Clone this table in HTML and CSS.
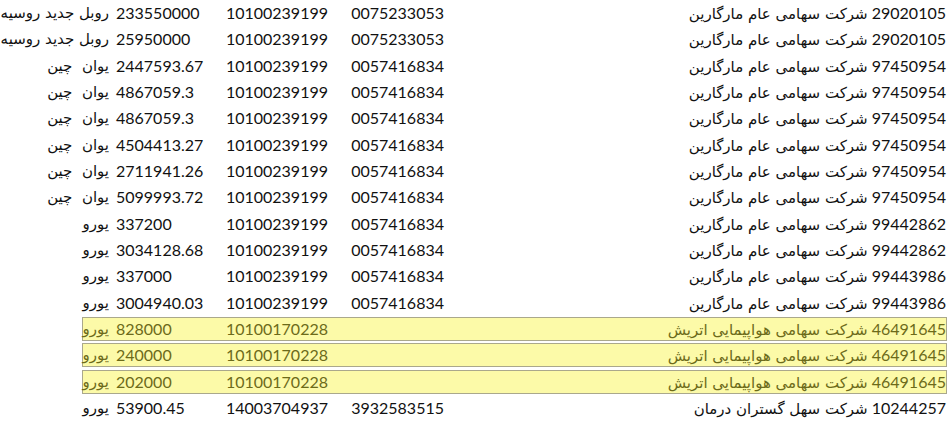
FILE: index.html
```html
<!DOCTYPE html>
<html lang="fa" dir="rtl">
<head>
  <meta charset="UTF-8" />
  <meta name="viewport" content="width=device-width, initial-scale=1.0"/>
  <title>Payments</title>
  <link rel="stylesheet" href="styles.css">
</head>
<body>
  <div class="list">
    <div class="row"><span class="c-name">29020105 <span class="fa">شرکت سهامی عام مارگارین</span></span><span class="c-nid">0075233053</span><span class="c-acct">10100239199</span><span class="c-amount">233550000</span><span class="c-cur fa">روبل جدید روسیه</span></div>
    <div class="row"><span class="c-name">29020105 <span class="fa">شرکت سهامی عام مارگارین</span></span><span class="c-nid">0075233053</span><span class="c-acct">10100239199</span><span class="c-amount">25950000</span><span class="c-cur fa">روبل جدید روسیه</span></div>
    <div class="row"><span class="c-name">97450954 <span class="fa">شرکت سهامی عام مارگارین</span></span><span class="c-nid">0057416834</span><span class="c-acct">10100239199</span><span class="c-amount">2447593.67</span><span class="c-cur fa">یوان&nbsp; چین</span></div>
    <div class="row"><span class="c-name">97450954 <span class="fa">شرکت سهامی عام مارگارین</span></span><span class="c-nid">0057416834</span><span class="c-acct">10100239199</span><span class="c-amount">4867059.3</span><span class="c-cur fa">یوان&nbsp; چین</span></div>
    <div class="row"><span class="c-name">97450954 <span class="fa">شرکت سهامی عام مارگارین</span></span><span class="c-nid">0057416834</span><span class="c-acct">10100239199</span><span class="c-amount">4867059.3</span><span class="c-cur fa">یوان&nbsp; چین</span></div>
    <div class="row"><span class="c-name">97450954 <span class="fa">شرکت سهامی عام مارگارین</span></span><span class="c-nid">0057416834</span><span class="c-acct">10100239199</span><span class="c-amount">4504413.27</span><span class="c-cur fa">یوان&nbsp; چین</span></div>
    <div class="row"><span class="c-name">97450954 <span class="fa">شرکت سهامی عام مارگارین</span></span><span class="c-nid">0057416834</span><span class="c-acct">10100239199</span><span class="c-amount">2711941.26</span><span class="c-cur fa">یوان&nbsp; چین</span></div>
    <div class="row"><span class="c-name">97450954 <span class="fa">شرکت سهامی عام مارگارین</span></span><span class="c-nid">0057416834</span><span class="c-acct">10100239199</span><span class="c-amount">5099993.72</span><span class="c-cur fa">یوان&nbsp; چین</span></div>
    <div class="row"><span class="c-name">99442862 <span class="fa">شرکت سهامی عام مارگارین</span></span><span class="c-nid">0057416834</span><span class="c-acct">10100239199</span><span class="c-amount">337200</span><span class="c-cur fa">یورو</span></div>
    <div class="row"><span class="c-name">99442862 <span class="fa">شرکت سهامی عام مارگارین</span></span><span class="c-nid">0057416834</span><span class="c-acct">10100239199</span><span class="c-amount">3034128.68</span><span class="c-cur fa">یورو</span></div>
    <div class="row"><span class="c-name">99443986 <span class="fa">شرکت سهامی عام مارگارین</span></span><span class="c-nid">0057416834</span><span class="c-acct">10100239199</span><span class="c-amount">337000</span><span class="c-cur fa">یورو</span></div>
    <div class="row"><span class="c-name">99443986 <span class="fa">شرکت سهامی عام مارگارین</span></span><span class="c-nid">0057416834</span><span class="c-acct">10100239199</span><span class="c-amount">3004940.03</span><span class="c-cur fa">یورو</span></div>
    <div class="row marked"><span class="c-name">46491645 <span class="fa">شرکت سهامی هواپیمایی اتریش</span></span><span class="c-nid"></span><span class="c-acct">10100170228</span><span class="c-amount">828000</span><span class="c-cur fa">یورو</span></div>
    <div class="row marked"><span class="c-name">46491645 <span class="fa">شرکت سهامی هواپیمایی اتریش</span></span><span class="c-nid"></span><span class="c-acct">10100170228</span><span class="c-amount">240000</span><span class="c-cur fa">یورو</span></div>
    <div class="row marked"><span class="c-name">46491645 <span class="fa">شرکت سهامی هواپیمایی اتریش</span></span><span class="c-nid"></span><span class="c-acct">10100170228</span><span class="c-amount">202000</span><span class="c-cur fa">یورو</span></div>
    <div class="row"><span class="c-name">10244257 <span class="fa">شرکت سهل گستران درمان</span></span><span class="c-nid">3932583515</span><span class="c-acct">14003704937</span><span class="c-amount">53900.45</span><span class="c-cur fa">یورو</span></div>
  </div>
</body>
</html>
```

FILE: styles.css
```css
body {
  margin: 0;
  padding: 0;
  background: #fff;
  color: #111;
  font-family: Lato, "DejaVu Sans", sans-serif;
  font-size: 16px;
}
.list {
  padding-top: 1px;
}
.row {
  display: flex;
  width: fit-content;
  height: 24px;
  box-sizing: border-box;
  margin-bottom: 2.35px;
  border: 1px solid transparent;
  line-height: 22px;
  white-space: nowrap;
}
.row > span {
  flex: none;
}
.fa {
  font-family: "DejaVu Sans", sans-serif;
  font-size: 15px;
}
.c-name {
  width: 502px;
}
.c-nid {
  width: 116px;
}
.c-acct {
  width: 127px;
}
.c-amount {
  width: 85px;
  direction: ltr;
  text-align: left;
}
.c-cur {
  padding-right: 7px;
}
.row.marked {
  background-color: #fcfaa8;
  border-color: #aaa88c;
  color: #6c6a1a;
}
```
